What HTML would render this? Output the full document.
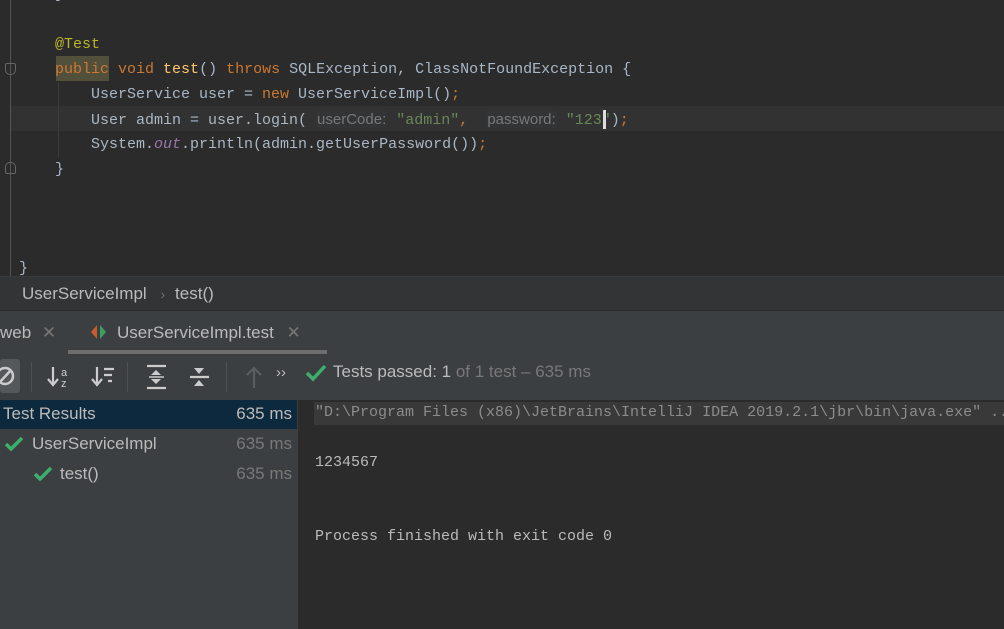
<!DOCTYPE html>
<html><head><meta charset="utf-8"><style>
*{margin:0;padding:0;box-sizing:border-box}
body{width:1004px;height:629px;overflow:hidden;background:#2b2b2b;position:relative;font-family:"Liberation Sans",sans-serif}
.abs{position:absolute}
.code{font-family:"Liberation Mono",monospace;font-size:15px;color:#a9b7c6;white-space:pre;line-height:25px;height:25px}
.kw{color:#cc7832}.fn{color:#ffc66d}.an{color:#bbb529}.st{color:#6a8759}.it{color:#9876aa;font-style:italic}
.hint{font-family:"Liberation Sans",sans-serif;font-size:15px;color:#787878;background:#333435;padding:0 1px;border-radius:3px}
.ui{font-size:17px;color:#bbbbbb;white-space:nowrap}
.ms{width:80px;text-align:right;left:212px}
</style></head><body>
<!-- editor -->
<div class="abs" style="left:10px;top:0;width:1px;height:276px;background:#555"></div>
<div class="abs" style="left:11px;top:106px;width:993px;height:25px;background:#323232"></div>
<div class="abs" style="left:56px;top:56px;width:53px;height:25px;background:#52503a"></div>
<div class="abs" style="left:58px;top:82px;width:1px;height:75px;background:#3b3b3b"></div>
<div class="abs code" style="left:55px;top:-18px">}</div>
<div class="abs code" style="left:55px;top:32px"><span class="an">@Test</span></div>
<div class="abs code" style="left:55px;top:57px"><span class="kw">public void</span> <span class="fn">test</span>() <span class="kw">throws</span> SQLException, ClassNotFoundException {</div>
<div class="abs code" style="left:91px;top:82px">UserService user = <span class="kw">new</span> UserServiceImpl()<span class="kw">;</span></div>
<div class="abs code" style="left:91px;top:107px">User admin = user.login( <span class="hint">userCode:</span> <span class="st">"admin"</span><span class="kw">,</span>  <span class="hint">password:</span> <span class="st">"123"</span>)<span class="kw">;</span></div>
<div class="abs" style="left:603px;top:110px;width:3px;height:19px;background:#ddd"></div>
<div class="abs code" style="left:91px;top:132px">System.<span class="it">out</span>.println(admin.getUserPassword())<span class="kw">;</span></div>
<div class="abs code" style="left:55px;top:157px">}</div>
<div class="abs code" style="left:19px;top:256px">}</div>
<div class="abs" style="left:5px;top:63px;width:11px;height:12px;border:1px solid #666;border-radius:2px 2px 5px 5px"></div>
<div class="abs" style="left:5px;top:162px;width:11px;height:12px;border:1px solid #666;border-radius:5px 5px 2px 2px"></div>
<!-- breadcrumb -->
<div class="abs" style="left:0;top:276px;width:1004px;height:34px;background:#323436;border-top:1px solid #3a3a3a"></div>
<div class="abs ui" style="left:22px;top:284px">UserServiceImpl<span style="color:#777;font-size:13px;margin:0 10px 0 14px">›</span>test()</div>
<!-- tab bar -->
<div class="abs" style="left:0;top:310px;width:1004px;height:45px;background:#3c3f41;border-top:1px solid #2b2b2b"></div>
<div class="abs ui" style="left:0;top:323px">web <span style="color:#777;margin-left:6px">✕</span></div>
<svg class="abs" style="left:90px;top:324px" width="18" height="16"><path d="M7 1 L1 8 L7 15Z" fill="#c75b32"/><path d="M10 1 L16 8 L10 15Z" fill="#3d9f5c"/></svg>
<div class="abs ui" style="left:117px;top:323px">UserServiceImpl.test <span style="color:#777;margin-left:8px">✕</span></div>
<div class="abs" style="left:68px;top:350px;width:259px;height:4px;background:#6e6e6e"></div>
<!-- toolbar -->
<div class="abs" style="left:0;top:355px;width:1004px;height:45px;background:#3c3f41"></div>
<div class="abs" style="left:0;top:359px;width:20px;height:34px;background:#55585a;border-radius:3px"></div>
<svg class="abs" style="left:0;top:364px" width="20" height="24"><circle cx="5" cy="12" r="8" fill="none" stroke="#ccc" stroke-width="2.5"/><path d="M0 18 L11 6" stroke="#ccc" stroke-width="2.5"/></svg>
<div class="abs" style="left:31px;top:362px;width:1px;height:30px;background:#505050"></div>
<div class="abs" style="left:127px;top:362px;width:1px;height:30px;background:#505050"></div>
<div class="abs" style="left:226px;top:362px;width:1px;height:30px;background:#505050"></div>
<svg class="abs" style="left:46px;top:362px" width="30" height="30"><path d="M7 5 V22 M2 17 L7 23 L12 17" stroke="#ccc" stroke-width="2.2" fill="none"/><text x="15" y="14" font-size="11" fill="#ccc" font-family="Liberation Sans">a</text><text x="15" y="25" font-size="11" fill="#ccc" font-family="Liberation Sans">z</text></svg>
<svg class="abs" style="left:90px;top:362px" width="30" height="30"><path d="M7 5 V22 M2 17 L7 23 L12 17" stroke="#ccc" stroke-width="2.2" fill="none"/><path d="M14 7 H24 M14 13 H22 M18 19 H22" stroke="#ccc" stroke-width="2.2"/></svg>
<svg class="abs" style="left:144px;top:362px" width="26" height="30"><path d="M3 4 H22 M3 26 H22" stroke="#ccc" stroke-width="2.2"/><path d="M12 8 L7 13 H17Z M12 22 L7 17 H17Z" fill="#ccc"/><path d="M5 15 H20" stroke="#ccc" stroke-width="1.5"/></svg>
<svg class="abs" style="left:187px;top:362px" width="26" height="30"><path d="M3 15 H22" stroke="#ccc" stroke-width="2.2"/><path d="M12 12 L7 6 H17Z M12 18 L7 24 H17Z" fill="#ccc"/></svg>
<svg class="abs" style="left:244px;top:364px" width="20" height="26"><path d="M10 4 V24 M3 11 L10 4 L17 11" stroke="#5a5d5f" stroke-width="2.2" fill="none"/></svg>
<div class="abs ui" style="left:276px;top:364px;font-size:15px">››</div>
<svg class="abs" style="left:305px;top:363px" width="22" height="20"><path d="M2 10 L8 16 L20 3" stroke="#3dae6b" stroke-width="3.5" fill="none"/></svg>
<div class="abs ui" style="left:333px;top:362px">Tests passed: 1 <span style="color:#787878">of 1 test – 635 ms</span></div>
<!-- left tree -->
<div class="abs" style="left:0;top:400px;width:298px;height:229px;background:#3c3f41"></div>
<div class="abs" style="left:0;top:400px;width:297px;height:29px;background:#0d293e"></div>
<div class="abs ui" style="left:3px;top:404px">Test Results</div>
<div class="abs ui ms" style="top:404px">635 ms</div>
<svg class="abs" style="left:4px;top:435px" width="20" height="18"><path d="M2 9 L7 14 L18 3" stroke="#3dae6b" stroke-width="3.5" fill="none"/></svg>
<div class="abs ui" style="left:32px;top:434px">UserServiceImpl</div>
<div class="abs ui ms" style="top:434px;color:#787878">635 ms</div>
<svg class="abs" style="left:33px;top:465px" width="20" height="18"><path d="M2 9 L7 14 L18 3" stroke="#3dae6b" stroke-width="3.5" fill="none"/></svg>
<div class="abs ui" style="left:60px;top:464px">test()</div>
<div class="abs ui ms" style="top:464px;color:#787878">635 ms</div>
<!-- console -->
<div class="abs" style="left:298px;top:400px;width:706px;height:229px;background:#2b2b2b"></div>
<div class="abs" style="left:314px;top:402px;width:690px;height:23px;background:#393939"></div>
<div class="abs code" style="left:315px;top:400px;color:#8c8c8c">"D:\Program Files (x86)\JetBrains\IntelliJ IDEA 2019.2.1\jbr\bin\java.exe" ...</div>
<div class="abs code" style="left:315px;top:450px;color:#bbbbbb">1234567</div>
<div class="abs code" style="left:315px;top:524px;color:#bbbbbb">Process finished with exit code 0</div>
</body></html>
